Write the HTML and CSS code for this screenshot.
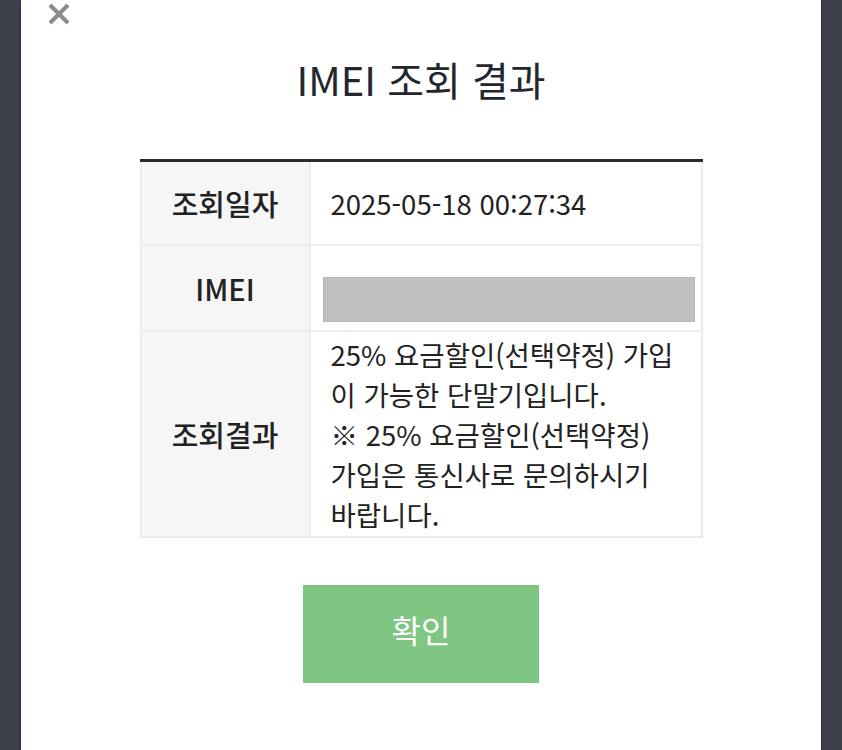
FILE: index.html
```html
<!DOCTYPE html>
<html lang="ko">
<head>
    <meta charset="UTF-8">
    <meta name="viewport" content="width=device-width, initial-scale=1.0">
    <title>IMEI 조회 결과</title>
    <link rel="stylesheet" href="styles.css">
</head>
<body>
    <div class="modal">
        <!-- Close button -->
        <div class="modal-head">
            <button class="close-btn" aria-label="닫기">
                <svg width="22" height="22" viewBox="0 0 22 22">
                    <path d="M2 2 L20 20 M20 2 L2 20" stroke="#8a8b8e" stroke-width="4" fill="none"/>
                </svg>
            </button>
        </div>

        <h1 class="modal-title">IMEI 조회 결과</h1>

        <table class="result-table">
            <tr>
                <th>조회일자</th>
                <td>2025-05-18 00:27:34</td>
            </tr>
            <tr>
                <th>IMEI</th>
                <td class="imei-cell"><div class="imei-mask"></div></td>
            </tr>
            <tr>
                <th>조회결과</th>
                <td class="result-cell">25% 요금할인(선택약정) 가입<br>이 가능한 단말기입니다.<br>※ 25% 요금할인(선택약정)<br>가입은 통신사로 문의하시기<br>바랍니다.</td>
            </tr>
        </table>

        <div class="actions">
            <button class="confirm-btn">확인</button>
        </div>
    </div>
</body>
</html>
```

FILE: styles.css
```css
html, body {
    margin: 0;
    padding: 0;
}

body {
    font-family: "Noto Sans CJK KR", "Noto Sans", sans-serif;
    background-color: #3e414b;
    color: #222;
}

.modal {
    width: 800px;
    min-height: 800px;
    margin: 0 auto;
    background-color: #fff;
    box-shadow: 0 0 2px rgba(0, 0, 0, 0.6);
}

.modal-head {
    display: flex;
    height: 28px;
    padding-left: 27px;
}

.close-btn {
    width: 22px;
    height: 28px;
    padding: 0;
    border: none;
    background: none;
    display: flex;
    align-items: center;
    cursor: pointer;
}

.modal-title {
    margin: 22px 0 51px;
    font-size: 40px;
    font-weight: 400;
    line-height: 58px;
    text-align: center;
    color: #23262e;
}

.result-table {
    width: 563px;
    margin: 0 auto;
    border-collapse: collapse;
    border-top: 3px solid #2b2b2b;
    font-size: 27.5px;
}

.result-table th,
.result-table td {
    border: 2px solid #ececec;
}

.result-table th {
    width: 167px;
    height: 82px;
    padding: 0;
    background-color: #f6f6f6;
    font-size: 29px;
    font-weight: 500;
    color: #222;
}

.result-table td {
    padding: 0 20px 0 20px;
    font-weight: 400;
    color: #222;
}

.imei-cell {
    vertical-align: top;
}

.result-table td.imei-cell {
    padding-top: 31px;
    padding-bottom: 8px;
}

.imei-mask {
    height: 43px;
    margin: 0 -14px 0 -8px;
    background-color: #c0c0c0;
    border: 1px solid #b6b6b6;
}

.result-cell {
    line-height: 40px;
    padding-top: 2px !important;
    padding-bottom: 2px !important;
    white-space: nowrap;
}

.actions {
    display: flex;
    justify-content: center;
    margin-top: 47px;
}

.confirm-btn {
    width: 236px;
    height: 98px;
    padding: 0 0 10px;
    border: none;
    background-color: #80c683;
    color: #fff;
    font-family: "Noto Sans CJK KR", "Noto Sans", sans-serif;
    font-size: 32px;
    font-weight: 400;
    cursor: pointer;
}
```
